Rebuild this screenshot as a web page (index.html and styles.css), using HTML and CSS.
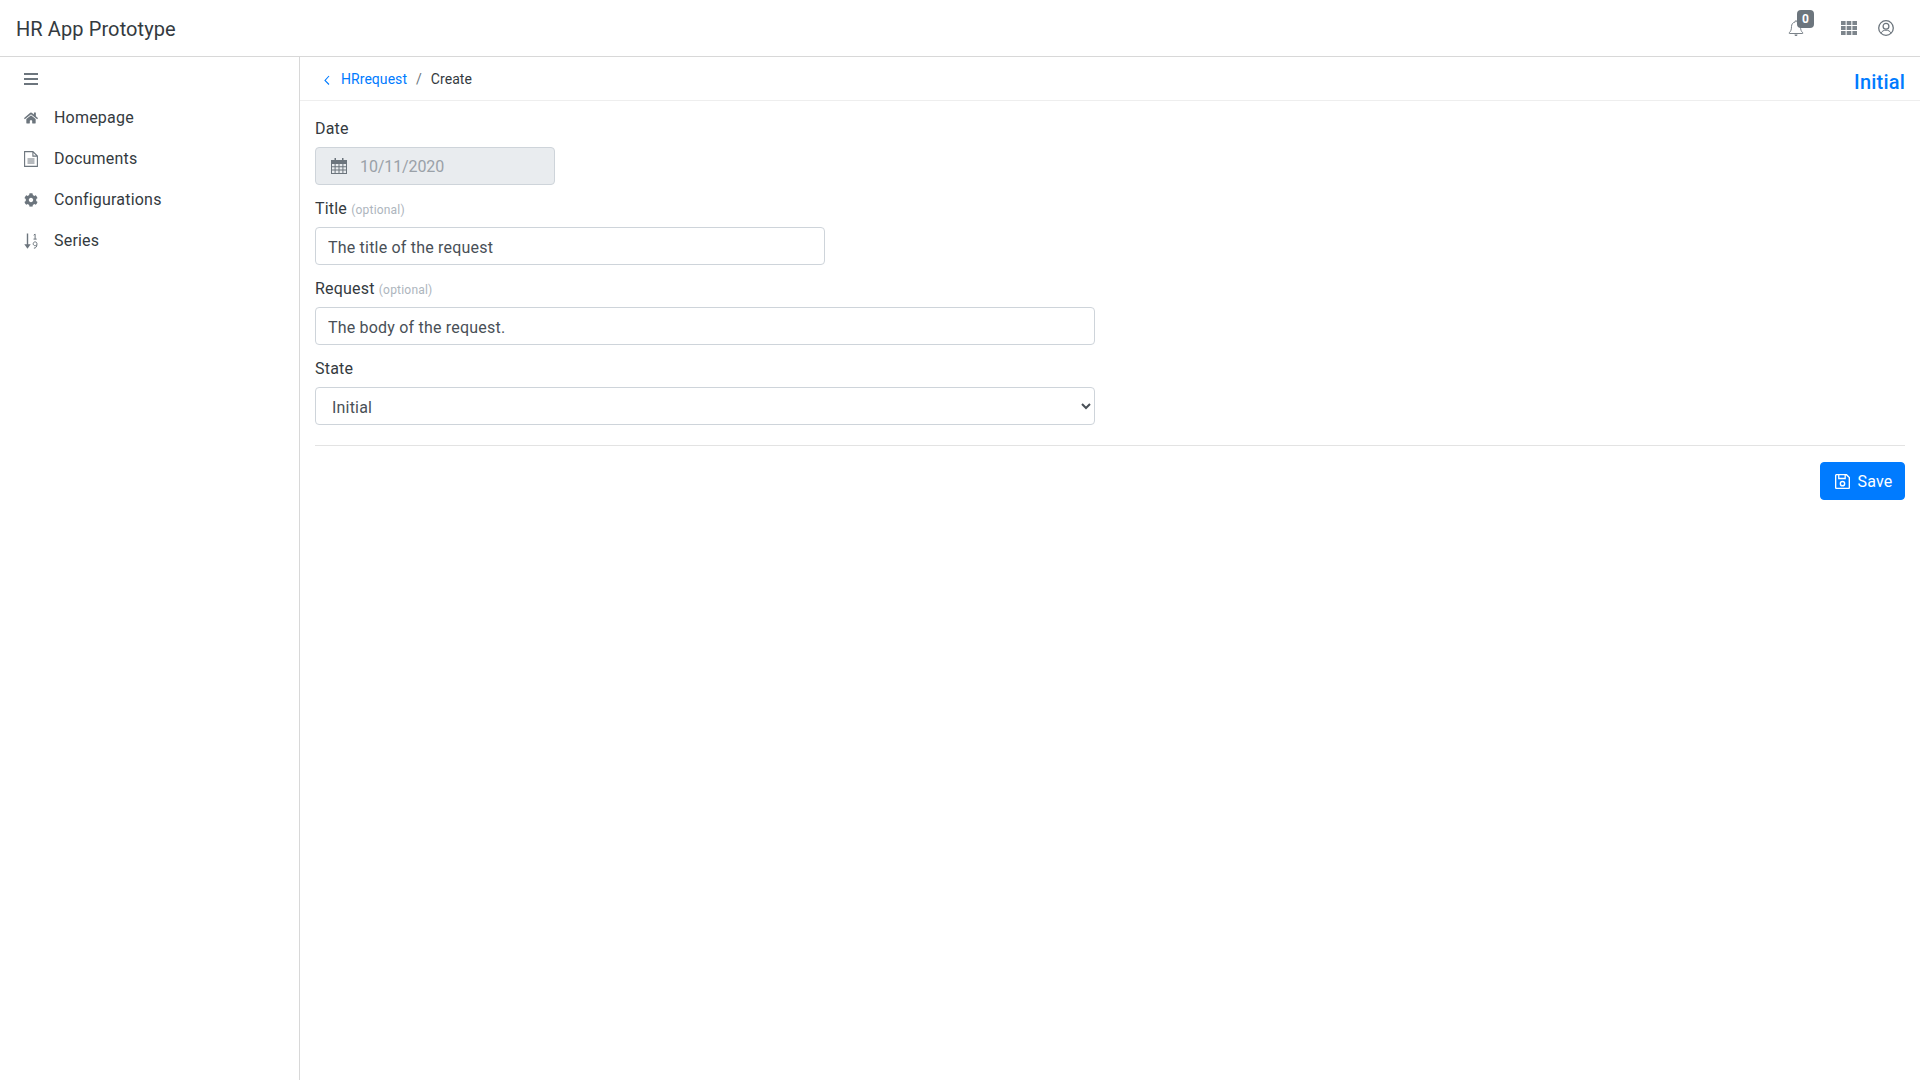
FILE: index.html
```html
<!DOCTYPE html>
<html lang="en">
<head>
<meta charset="utf-8">
<title>HR App Prototype</title>
<link rel="stylesheet" href="styles.css">
</head>
<body>
<header class="topbar">
  <div class="brand">HR App Prototype</div>
  <div class="top-icons">
    <div class="bell-wrap">
      <svg class="ic-bell" viewBox="0 0 18 18"><path d="M9 1.600c-.5 0-.8.4-.8.9v.5C5.800 3.400 4.500 5.300 4.500 7.500c0 3.500-.8 4.800-2.300 6.300-.3.3-.1.700.3.700h13c.4 0 .6-.4.3-.7-1.500-1.500-2.300-2.800-2.300-6.300 0-2.200-1.300-4.100-3.700-4.500v-.5c0-.5-.3-.9-.8-.9z" fill="none" stroke="#6c757d" stroke-width=".9"/><path d="M7.500 15.500a1.500 1.500 0 0 0 3 0z" fill="#6c757d"/></svg>
      <span class="badge">0</span>
    </div>
    <svg class="ic-grid" viewBox="0 0 16 14"><path fill="#7d858c" d="M0 0h4.600v4H0zM5.700 0h4.600v4H5.700zM11.400 0H16v4h-4.600zM0 5h4.600v4H0zM5.700 5h4.600v4H5.700zM11.400 5H16v4h-4.600zM0 10h4.600v4H0zM5.700 10h4.600v4H5.700zM11.400 10H16v4h-4.600z"/></svg>
    <svg class="ic-user" viewBox="0 0 16 16"><circle cx="8" cy="8" r="7.300" fill="none" stroke="#6c757d" stroke-width="1.300"/><circle cx="8" cy="6.200" r="2.900" fill="none" stroke="#6c757d" stroke-width="1.300"/><path d="M3.200 12.900c.7-1.800 2.500-2.700 4.800-2.700s4.100.9 4.800 2.700" fill="none" stroke="#6c757d" stroke-width="1"/></svg>
  </div>
</header>
<div class="main">
  <aside class="sidebar">
    <div class="toggle">
      <svg class="side-ic" viewBox="0 0 14 12"><path fill="#6c757d" d="M0 0h14v2H0zM0 5h14v2H0zM0 10h14v2H0z"/></svg>
    </div>
    <nav class="menu">
      <a class="menu-item">
        <svg class="side-ic" viewBox="0 0 576 512"><path fill="#6c757d" d="M280.370 148.260L96 300.110V464a16 16 0 0 0 16 16l112.060-.29a16 16 0 0 0 15.920-16V368a16 16 0 0 1 16-16h64a16 16 0 0 1 16 16v95.640a16 16 0 0 0 16 16.050L464 480a16 16 0 0 0 16-16V300L295.670 148.260a12.190 12.190 0 0 0-15.300 0zM571.600 251.470L488 182.560V44.050a12 12 0 0 0-12-12h-56a12 12 0 0 0-12 12v72.610L318.470 43a48 48 0 0 0-61 0L4.340 251.470a12 12 0 0 0-1.600 16.900l25.500 31A12 12 0 0 0 45.150 301l235.220-193.740a12.190 12.190 0 0 1 15.300 0L530.900 301a12 12 0 0 0 16.900-1.600l25.500-31a12 12 0 0 0-1.700-16.930z"/></svg>
        <span>Homepage</span>
      </a>
      <a class="menu-item">
        <svg class="side-ic" viewBox="0 0 14 16"><path fill="none" stroke="#6c757d" stroke-width="1.100" d="M.6.6h8.300l4.500 4.500v10.300H.6zM8.900.6v4.500h4.500"/><path stroke="#6c757d" d="M3.500 8h7M3.500 10h7M3.500 12h7"/></svg>
        <span>Documents</span>
      </a>
      <a class="menu-item">
        <svg class="side-ic" viewBox="0 0 512 512"><path fill="#6c757d" d="M487.400 315.700l-42.600-24.600c4.300-23.200 4.300-47 0-70.200l42.600-24.600c4.900-2.800 7.100-8.600 5.500-14-11.100-35.600-30-67.800-54.700-94.600-3.800-4.100-10-5.100-14.800-2.300L380.800 110c-17.900-15.400-38.500-27.300-60.800-35.100V25.800c0-5.600-3.900-10.500-9.400-11.700-36.700-8.200-74.300-7.800-109.200 0-5.500 1.200-9.400 6.100-9.400 11.700V75c-22.200 7.900-42.800 19.800-60.800 35.100L88.700 85.500c-4.900-2.800-11-1.900-14.800 2.300-24.700 26.700-43.600 58.900-54.700 94.600-1.700 5.400.6 11.200 5.500 14L67.300 221c-4.300 23.200-4.300 47 0 70.200l-42.600 24.600c-4.900 2.800-7.100 8.600-5.500 14 11.100 35.600 30 67.800 54.700 94.600 3.800 4.100 10 5.100 14.800 2.300l42.600-24.600c17.900 15.400 38.500 27.300 60.800 35.100v49.200c0 5.600 3.900 10.500 9.400 11.700 36.700 8.200 74.300 7.800 109.200 0 5.500-1.200 9.400-6.100 9.400-11.700v-49.200c22.200-7.900 42.800-19.800 60.800-35.100l42.600 24.600c4.900 2.800 11 1.900 14.800-2.300 24.700-26.700 43.600-58.900 54.700-94.600 1.500-5.500-.7-11.300-5.600-14.100zM256 336c-44.100 0-80-35.900-80-80s35.900-80 80-80 80 35.900 80 80-35.900 80-80 80z"/></svg>
        <span>Configurations</span>
      </a>
      <a class="menu-item">
        <svg class="side-ic" viewBox="0 0 14 16"><path fill="none" stroke="#6c757d" stroke-width="1.400" d="M3.500.5v13"/><path fill="#6c757d" d="M.3 11.300h6.400L3.500 15.700z"/><path fill="none" stroke="#6c757d" stroke-width="1" d="M9.700 2.200l1.400-1.100v5M9.500 6.100h3.200M13 10.900a1.900 1.900 0 1 0-.1.500c0 2.300-1 3.700-3 3.800"/></svg>
        <span>Series</span>
      </a>
    </nav>
  </aside>
  <main class="content">
    <div class="crumbbar">
      <div class="crumbs">
        <svg class="ic-back" viewBox="0 0 8 10"><path fill="none" stroke="#007bff" stroke-width="1.100" d="M6 1L2 5.500 6 9.500"/></svg>
        <a class="crumb-link">HRrequest</a>
        <span class="crumb-sep">/</span>
        <span class="crumb-current">Create</span>
      </div>
      <div class="state-tag">Initial</div>
    </div>
    <form class="form">
      <div class="field">
        <label class="label">Date</label>
        <div class="date-box">
          <svg class="ic-cal" viewBox="0 0 16 16"><path fill="#6c757d" d="M3.500 0h1.500v2h6V0h1.500v2H16v14H0V2h3.500zM1 6v2.200h2.600V6zm3.600 0v2.200h2.900V6zm3.900 0v2.200h2.900V6zm3.900 0v2.200H15V6zM1 9.200v2.300h2.600V9.200zm3.600 0v2.300h2.900V9.200zm3.900 0v2.300h2.900V9.200zm3.900 0v2.300H15V9.200zM1 12.500V15h2.600v-2.500zm3.600 0V15h2.900v-2.500zm3.900 0V15h2.900v-2.500zm3.900 0V15H15v-2.500z"/></svg>
          <span class="date-value">10/11/2020</span>
        </div>
      </div>
      <div class="field">
        <label class="label">Title <small class="optional">(optional)</small></label>
        <input class="input input-title" type="text" value="The title of the request">
      </div>
      <div class="field">
        <label class="label">Request <small class="optional">(optional)</small></label>
        <input class="input input-wide" type="text" value="The body of the request.">
      </div>
      <div class="field">
        <label class="label">State</label>
        <select class="input input-wide select"><option>Initial</option></select>
      </div>
      <hr class="divider">
      <div class="actions">
        <button class="btn-save" type="button">
          <svg class="ic-save" viewBox="0 0 14 14"><path fill="none" stroke="#fff" stroke-width="1.300" d="M.6 1.500a.9.9 0 0 1 .9-.9h9.200l2.700 2.700v9.200a.9.9 0 0 1-.9.900H1.500a.9.9 0 0 1-.9-.9z"/><path fill="none" stroke="#fff" stroke-width="1.200" d="M3.500.8v3.400h6V.8"/><circle cx="7" cy="9" r="2" fill="none" stroke="#fff" stroke-width="1.300"/></svg>
          <span>Save</span>
        </button>
      </div>
    </form>
  </main>
</div>
</body>
</html>
```
FILE: styles.css
```css
* { box-sizing: border-box; }
html, body { height: 100%; }
body {
  margin: 0;
  font-family: Roboto, "Noto Sans", sans-serif;
  font-size: 16px;
  letter-spacing: .2px;
  color: #212529;
  background: #fff;
  overflow: hidden;
}
.topbar {
  height: 57px;
  border-bottom: 1px solid #d8d8d8;
  display: flex;
  align-items: center;
  justify-content: space-between;
  padding: 0 16px;
}
.brand { font-size: 20px; letter-spacing: .1px; color: #343a40; padding-top: 2px; }
.top-icons { display: flex; align-items: center; padding-right: 10px; }
.bell-wrap { position: relative; width: 18px; height: 18px; margin-right: 36px; }
.ic-bell { width: 18px; height: 18px; display: block; }
.badge {
  position: absolute;
  left: 10px;
  top: -9px;
  width: 17px;
  height: 18px;
  border-radius: 4px;
  background: #6c757d;
  color: #fff;
  font-size: 12px;
  font-weight: 700;
  line-height: 18px;
  text-align: center;
}
.ic-grid { width: 16px; height: 14px; margin-right: 21px; }
.ic-user { width: 16px; height: 16px; }
.main { display: flex; height: calc(100% - 57px); }
.sidebar { width: 300px; flex: none; border-right: 1px solid #d8d8d8; padding-left: 24px; }
.toggle { height: 40px; padding-top: 4px; display: flex; align-items: center; }
.side-ic { width: 14px; height: 16px; flex: none; }
.menu { display: flex; flex-direction: column; }
.menu-item { height: 41px; display: flex; align-items: center; gap: 16px; color: #343a40; font-size: 16px; }
.content { flex: 1; min-width: 0; display: flex; flex-direction: column; }
.crumbbar {
  height: 44px;
  border-bottom: 1px solid #eee;
  display: flex;
  justify-content: space-between;
  padding: 0 15px 0 23px;
}
.crumbs { display: flex; align-items: center; font-size: 14px; letter-spacing: .05px; padding-top: 1px; }
.ic-back { width: 8px; height: 10px; margin-right: 10px; margin-top: 2px; }
.crumb-link { color: #007bff; }
.crumb-sep { color: #6c757d; margin: 0 9px; }
.crumb-current { color: #343a40; }
.state-tag { color: #007bff; font-size: 20px; font-weight: 500; padding-top: 13px; }
.form { padding: 14px 15px 0 15px; display: flex; flex-direction: column; }
.field { display: flex; flex-direction: column; margin-bottom: 10px; }
.label { display: block; height: 24px; margin-bottom: 8px; line-height: 27px; font-size: 16px; color: #343a40; }
.optional { font-size: 12px; color: #adb5bd; }
.date-box {
  width: 240px;
  height: 38px;
  background: #e9ecef;
  border: 1px solid #ced4da;
  border-radius: 4px;
  display: flex;
  align-items: center;
  padding-left: 15px;
  gap: 13px;
}
.ic-cal { width: 16px; height: 16px; }
.date-value { color: #9aa1a8; font-size: 16px; letter-spacing: -.1px; }
.input {
  display: block;
  height: 38px;
  border: 1px solid #ced4da;
  border-radius: 4px;
  background: #fff;
  color: #495057;
  font: inherit;
  letter-spacing: .2px;
  padding: 2px 12px 0;
}
.input-title { width: 510px; }
.input-wide { width: 780px; }
.select { padding: 2px 12px 0; }
.divider { margin: 10px 0 16px; border: 0; border-top: 1px solid #e3e3e3; }
.actions { display: flex; justify-content: flex-end; }
.btn-save {
  height: 38px;
  width: 85px;
  background: #007bff;
  border: 1px solid #007bff;
  border-radius: 4px;
  color: #fff;
  font: inherit;
  letter-spacing: .2px;
  display: flex;
  align-items: center;
  justify-content: center;
  gap: 7px;
  padding: 0 0 0 3px;
}
.ic-save { width: 15px; height: 15px; }
```
